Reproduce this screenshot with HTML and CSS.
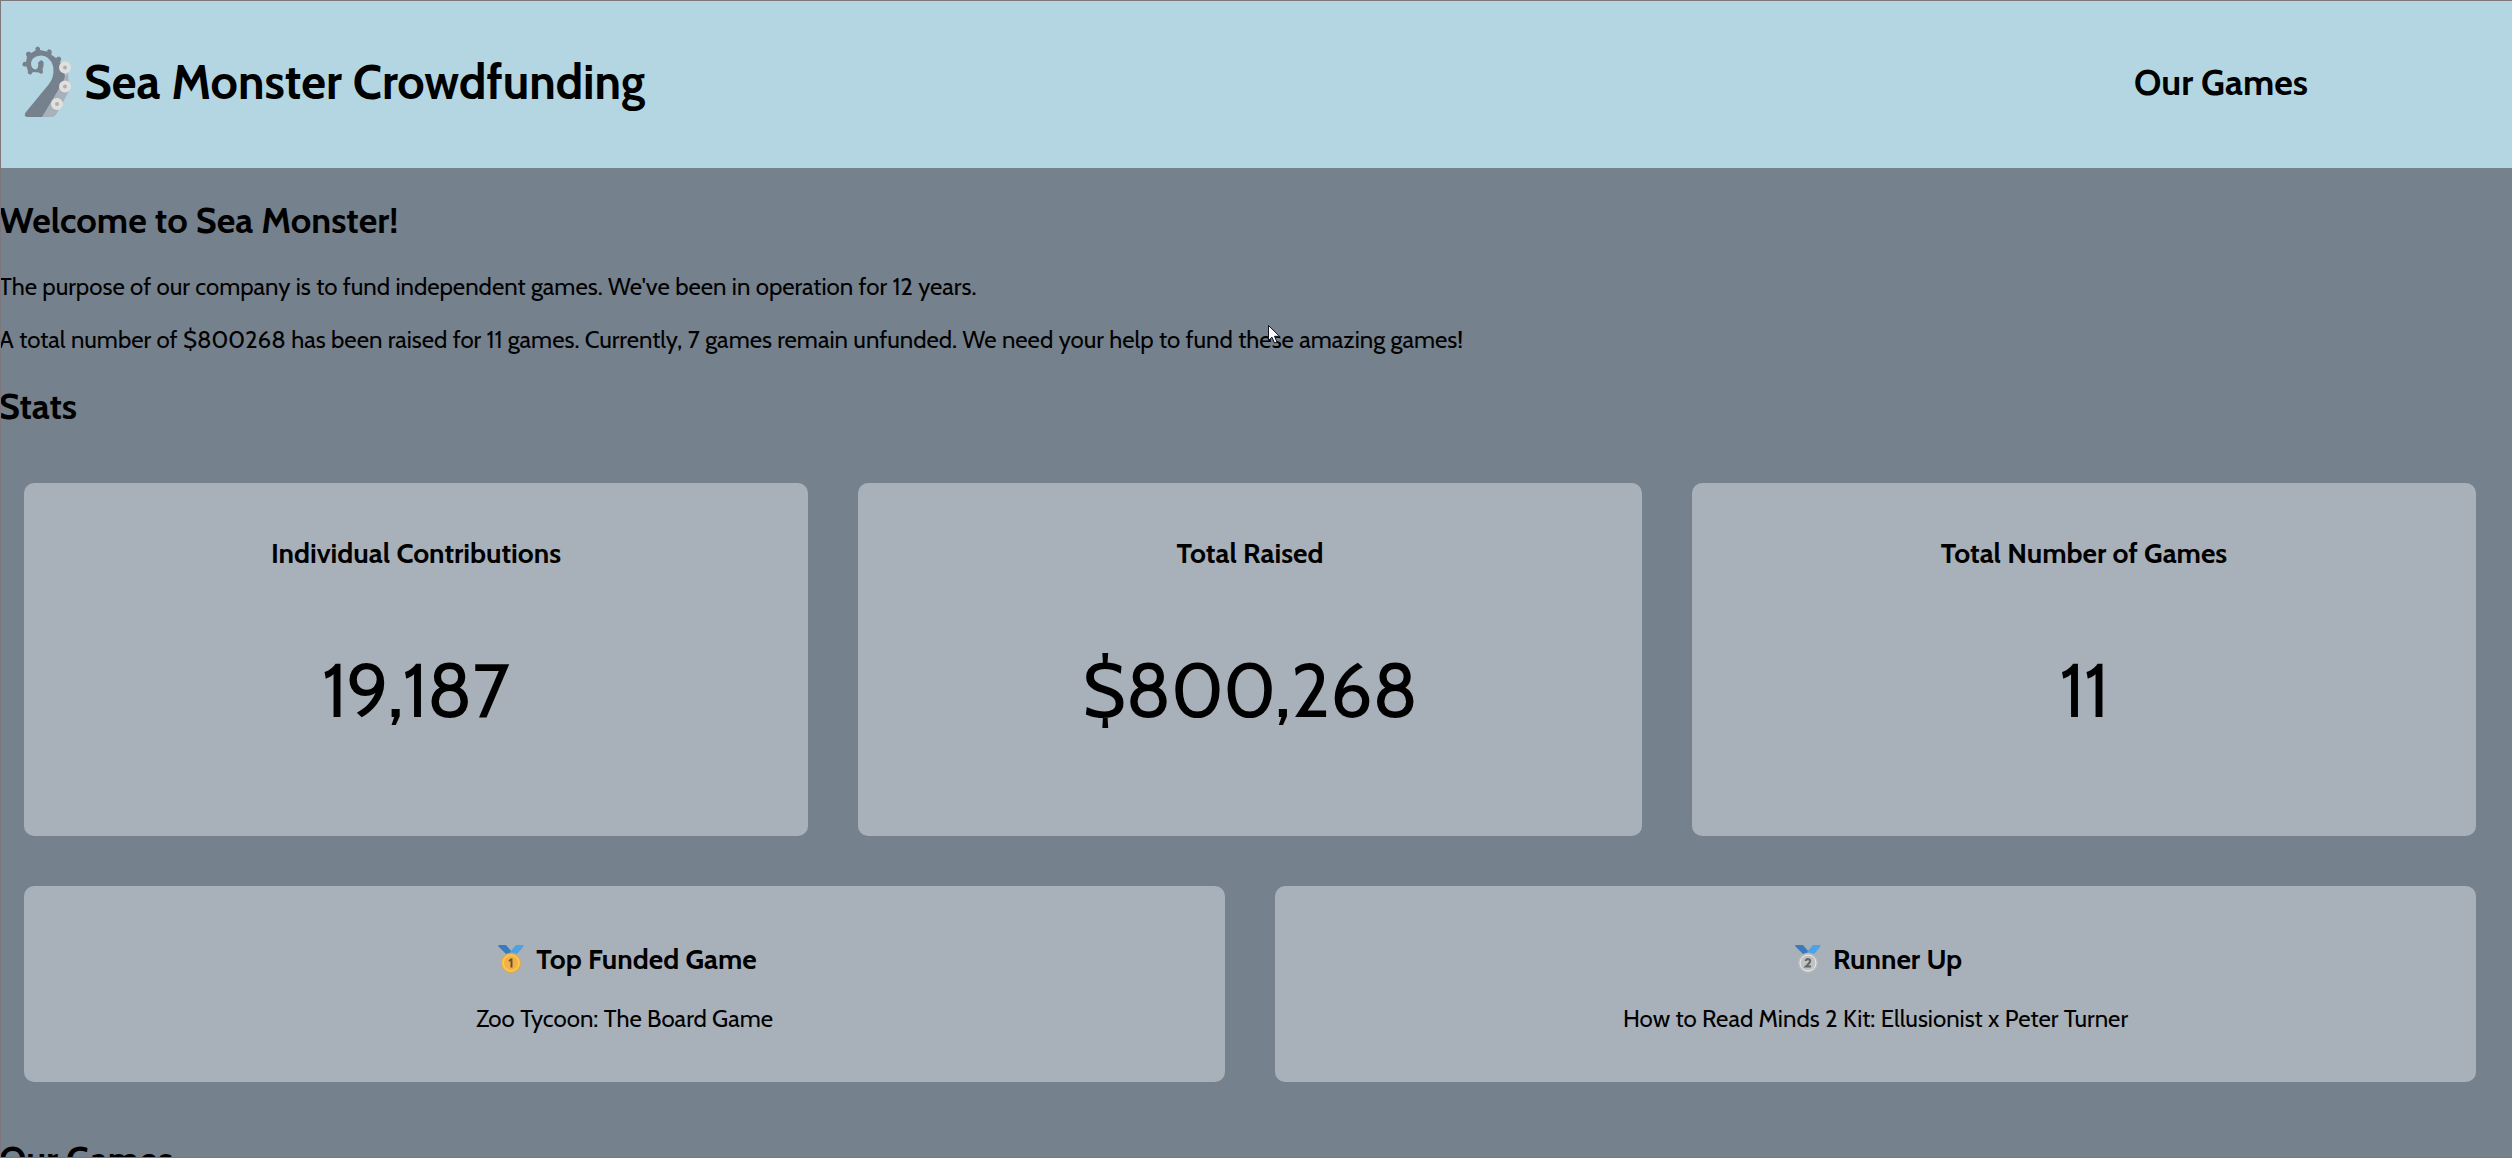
FILE: index.html
```html
<!DOCTYPE html>
<html lang="en">
<head>
<meta charset="utf-8">
<title>Sea Monster Crowdfunding</title>
<link rel="stylesheet" href="styles.css">
</head>
<body>
<header class="header">
  <div class="brand">
    <svg class="logo" viewBox="0 0 50 72" aria-hidden="true">
      <path d="M46 26 47 45 35 67Q33 71 29 71H12Z" fill="#a8b0b9"/>
      <path d="M14 71H5Q1 70 4 66L27 38Q33 30 31 20Q28 10 19 9.500Q10 10 9 17Q9 23 14 23.500Q17 22 16 17Q19 12 21.500 16Q22 20 20.500 23L21 26.500Q19 29 17 26.500L11 26L9 28.500Q5 29 6 25L4.500 20.500Q0 21 .500 18Q1 15 4 16L5 10.500Q3 8 5 6Q8 5 9 7L13.500 4.500V2Q15.500-1 18 2V4L25 5.500Q26 2 29 4Q30.500 6 29 8.500L34 12Q37 9 39 12Q39.500 14 38 16Q42 22 43 30Q42 36 38 41L20 71Z" fill="#75818d"/>
      <g fill="#a8b0b9" stroke="#e2e0dd" stroke-width="4">
        <circle cx="43" cy="21.500" r="4"/><circle cx="43" cy="40.500" r="4"/><circle cx="35" cy="58" r="4"/>
      </g>
    </svg>
    <h1>Sea Monster Crowdfunding</h1>
  </div>
  <nav><a href="#our-games">Our Games</a></nav>
</header>

<main>
  <section class="intro">
    <h2>Welcome to Sea Monster!</h2>
    <p>The purpose of our company is to fund independent games. We've been in operation for 12 years.</p>
    <p>A total number of $800268 has been raised for 11 games. Currently, 7 games remain unfunded. We need your help to fund these amazing games!</p>
  </section>

  <section>
    <h2>Stats</h2>
    <div class="cards three">
      <article class="card"><h3>Individual Contributions</h3><p class="number">19,187</p></article>
      <article class="card"><h3>Total Raised</h3><p class="number">$800,268</p></article>
      <article class="card"><h3>Total Number of Games</h3><p class="number">11</p></article>
    </div>
    <div class="cards two">
      <article class="card">
        <h3 class="award">
          <svg class="medal" viewBox="0 0 38 28" aria-hidden="true">
            <path d="M6 1Q6 0 8 0H14L20 7 14 9Z" fill="#3a7abd"/>
            <path d="M18 7 24 0H31Q32 0 31 2L25 9Z" fill="#4ba3e6"/>
            <circle cx="19" cy="18" r="10" fill="#e9a53c"/>
            <circle cx="19" cy="18" r="8" fill="#f2b04a" stroke="#fbc84e" stroke-width="2"/>
            <path d="M16.500 15.500 18.500 13.500H20.500V22.500H18.500V16L17 16.800Z" fill="#6e4e2b"/>
          </svg>
          Top Funded Game
        </h3>
        <p>Zoo Tycoon: The Board Game</p>
      </article>
      <article class="card">
        <h3 class="award">
          <svg class="medal" viewBox="0 0 38 28" aria-hidden="true">
            <path d="M6 1Q6 0 8 0H14L20 7 14 9Z" fill="#3a7abd"/>
            <path d="M18 7 24 0H31Q32 0 31 2L25 9Z" fill="#4ba3e6"/>
            <circle cx="19" cy="18" r="10" fill="#b9bcbd"/>
            <circle cx="19" cy="18" r="8" fill="#c0c2c3" stroke="#e9eaea" stroke-width="1"/>
            <path d="M16.800 16Q17 14 19 14Q21.500 14.300 21 16.500Q20.500 18 17 21.500H22" fill="none" stroke="#626567" stroke-width="2.200"/>
          </svg>
          Runner Up
        </h3>
        <p>How to Read Minds 2 Kit: Ellusionist x Peter Turner</p>
      </article>
    </div>
  </section>

  <section id="our-games">
    <h2>Our Games</h2>
  </section>
</main>

<svg class="pointer" viewBox="0 0 13 19" aria-hidden="true">
  <path d="M.5.500V15.500L4 12.200 6.500 18 9 17 6.500 11.300H11.500Z" fill="#fff" stroke="#10131f"/>
</svg>
</body>
</html>
```
FILE: styles.css
```css
* { box-sizing: border-box; }

html, body { height: 100%; }

body {
  margin: 0;
  overflow: hidden;
  background: #75818d;
  color: #000;
  font: 24px/29px Cabin, Lato, "Liberation Sans", sans-serif;
}

/* thin window edge */
body::after {
  content: "";
  position: fixed;
  inset: 0;
  border: solid #7d777c;
  border-width: 1px 0 1px 1px;
  pointer-events: none;
}

h1, h2, h3 { font-weight: 700; }
h1 { margin: 0; font-size: 48px; line-height: 58px; }
h2 { margin: 30px 0; font-size: 36px; line-height: 44px; }
h3 { margin: 28px 0; font-size: 28px; line-height: 34px; }
p { margin: 24px 0; }

.header {
  display: flex;
  align-items: center;
  justify-content: space-between;
  padding: 46px 204px 50px 22px;
  background: #b4d6e2;
}

.brand { display: flex; align-items: center; gap: 12px; }
.logo { width: 50px; height: 72px; }

.header a {
  color: inherit;
  font-size: 36px;
  font-weight: 700;
  line-height: 44px;
  text-decoration: none;
}

main { margin-left: -1px; }

.cards {
  display: grid;
  gap: 50px;
  padding: 25px 36px 25px 25px;
}
.three { grid-template-columns: repeat(3, 1fr); }
.two { grid-template-columns: repeat(2, 1fr); }

.card {
  display: flow-root;
  padding: 25px;
  border-radius: 10px;
  background: #a8b0b9;
  text-align: center;
}

.number { margin: 75px 0; font-size: 75px; line-height: 91px; }

.award {
  display: flex;
  align-items: center;
  justify-content: center;
  gap: 6px;
  padding-top: 3px;
}
.medal { width: 38px; height: 28px; }

.pointer {
  position: absolute;
  left: 1268px;
  top: 325px;
  width: 13px;
  height: 19px;
}
```
